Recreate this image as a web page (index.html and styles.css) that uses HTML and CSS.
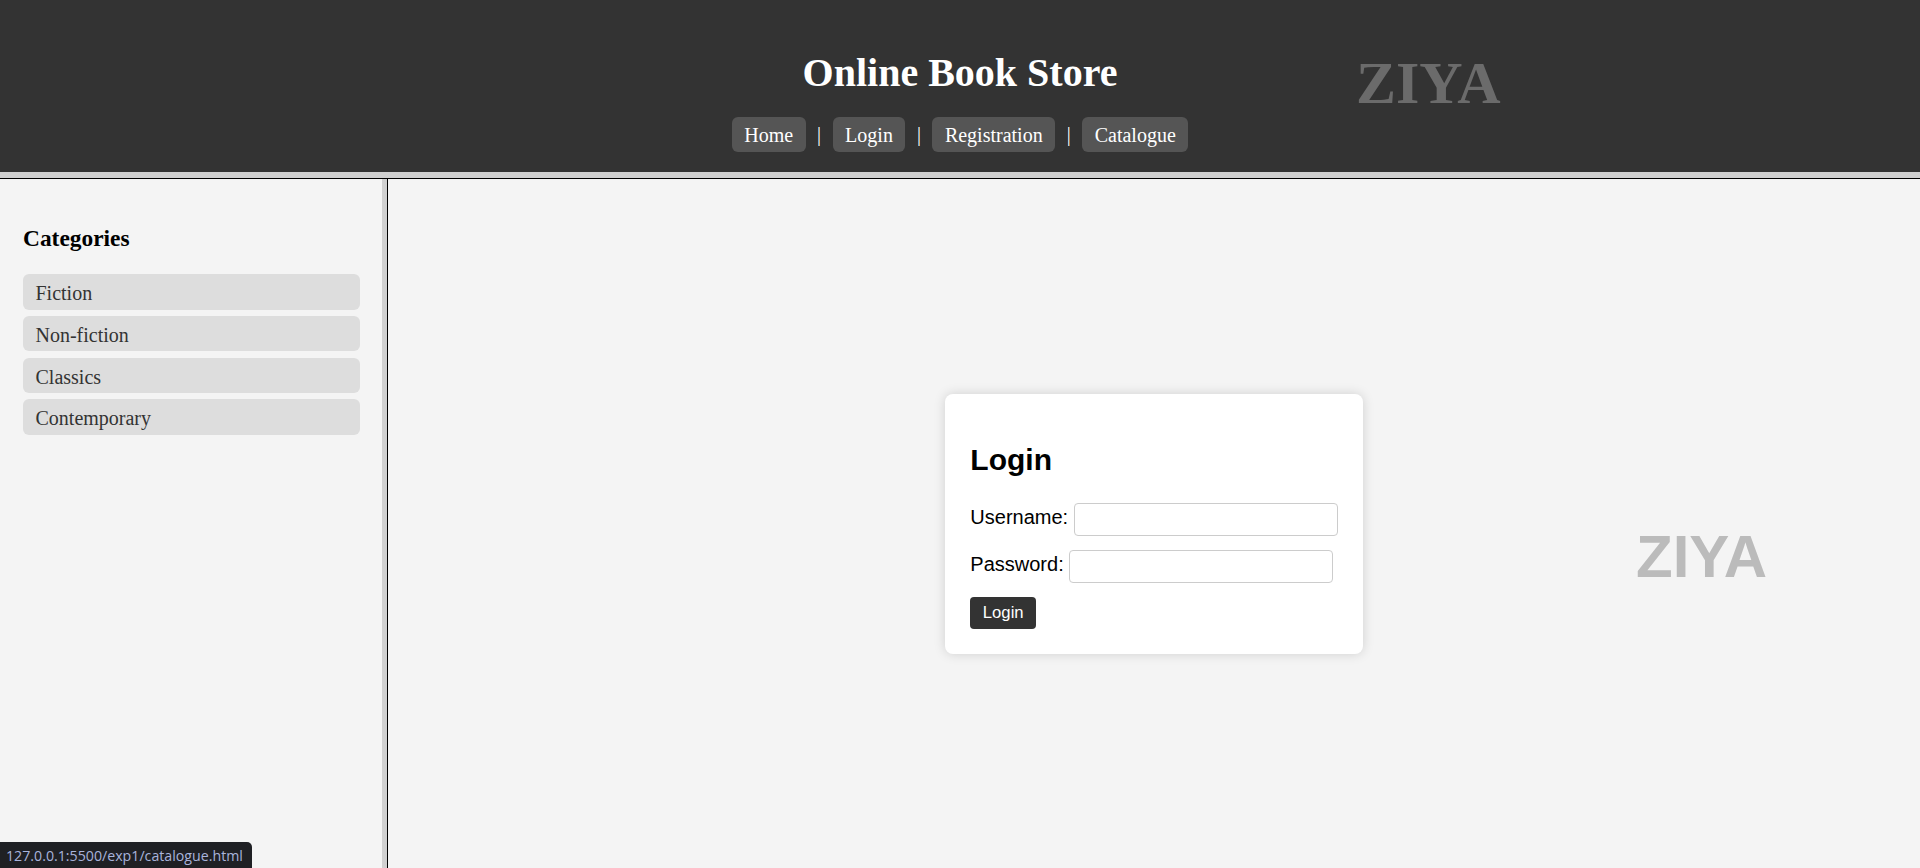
FILE: index.html
```html
<!DOCTYPE html>
<html lang="en">
<head>
<meta charset="utf-8">
<title>Online Book Store</title>
<link rel="stylesheet" href="styles.css">
</head>
<body>
<div class="page">
  <header class="top">
    <h1 class="title">Online Book Store</h1>
    <nav class="nav">
      <a class="nav-link" href="#">Home</a><span class="sep">|</span><a class="nav-link" href="#">Login</a><span class="sep">|</span><a class="nav-link" href="#">Registration</a><span class="sep">|</span><a class="nav-link" href="#">Catalogue</a>
    </nav>
    <div class="brand-mark">ZIYA</div>
  </header>
  <div class="hborder"></div>
  <div class="frames">
    <aside class="sidebar">
      <h3 class="cat-title">Categories</h3>
      <ul class="cat-list">
        <li class="cat-item">Fiction</li>
        <li class="cat-item">Non-fiction</li>
        <li class="cat-item">Classics</li>
        <li class="cat-item">Contemporary</li>
      </ul>
    </aside>
    <div class="vborder"></div>
    <main class="content">
      <form class="login-card">
        <h2 class="login-title">Login</h2>
        <div class="field"><label class="field-label" for="u">Username:</label><input class="field-input" id="u" type="text"></div>
        <div class="field"><label class="field-label" for="p">Password:</label><input class="field-input" id="p" type="password"></div>
        <button type="button" class="login-btn">Login</button>
      </form>
      <div class="content-mark">ZIYA</div>
    </main>
  </div>
</div>
<div class="status">127.0.0.1:5500/exp1/catalogue.html</div>
</body>
</html>
```
FILE: styles.css
```css
html, body {
  margin: 0;
  padding: 0;
  height: 100%;
  overflow: hidden;
}
body {
  background: #f4f4f4;
  font-family: "Liberation Serif", "Times New Roman", serif;
}
.page {
  display: flex;
  flex-direction: column;
  height: 100vh;
}
.top {
  position: relative;
  height: 172px;
  flex: none;
  background: #333333;
  display: flex;
  flex-direction: column;
  align-items: center;
}
.title {
  margin: 51px 0 0;
  font-size: 40px;
  line-height: 44px;
  font-weight: bold;
  color: #ffffff;
}
.nav {
  margin-top: 22px;
  display: flex;
  align-items: center;
}
.nav-link {
  display: block;
  padding: 6.75px 12.5px 5.75px;
  line-height: 22px;
  font-size: 20px;
  color: #ffffff;
  text-decoration: none;
  background: #555555;
  border-radius: 6px;
}
.sep {
  padding: 0 11.5px;
  font-size: 20px;
  line-height: 22px;
  color: #ffffff;
}
.brand-mark {
  position: absolute;
  left: 1356px;
  top: 53px;
  font-size: 60px;
  line-height: 60px;
  font-weight: bold;
  color: #6b6b6b;
}
.hborder {
  flex: none;
  height: 6px;
  background: #d0d0d0;
  border-bottom: 1px solid #000000;
}
.frames {
  flex: 1;
  display: flex;
  min-height: 0;
}
.sidebar {
  width: 382px;
  flex: none;
  box-sizing: border-box;
  padding: 0 22px 0 23px;
  background: #f4f4f4;
}
.cat-title {
  margin: 46px 0 23px;
  font-size: 23.4px;
  line-height: 26px;
  font-weight: bold;
  color: #000000;
}
.cat-list {
  list-style: none;
  margin: 0;
  padding: 0;
  display: flex;
  flex-direction: column;
  gap: 6.25px;
}
.cat-item {
  padding: 8px 12.5px 4.5px;
  line-height: 23px;
  font-size: 20px;
  color: #333333;
  background: #dddddd;
  border-radius: 6px;
}
.vborder {
  flex: none;
  width: 5px;
  background: #d0d0d0;
  border-right: 1px solid #000000;
}
.content {
  position: relative;
  flex: 1;
  display: flex;
  align-items: center;
  justify-content: center;
  background: #f4f4f4;
}
.login-card {
  display: flex;
  flex-direction: column;
  align-items: flex-start;
  padding: 25px;
  background: #ffffff;
  border-radius: 8px;
  box-shadow: 0 0 12px rgba(0, 0, 0, 0.15);
  font-family: "Liberation Sans", Arial, sans-serif;
}
.login-title {
  margin: 24px 0 26px;
  font-size: 30px;
  line-height: 34px;
  font-weight: bold;
  color: #000000;
}
.field {
  display: flex;
  align-items: baseline;
  gap: 5.5px;
  margin-bottom: 14px;
}
.field-label {
  font-size: 20px;
  line-height: 23px;
  color: #000000;
}
.field-input {
  box-sizing: border-box;
  width: 264px;
  height: 33px;
  margin: 0;
  padding: 0 8px;
  border: 1px solid #cccccc;
  border-radius: 4px;
  background: #ffffff;
  font-family: "Liberation Sans", Arial, sans-serif;
  font-size: 16.67px;
}
.login-btn {
  height: 32px;
  padding: 0 12.5px;
  margin: 0;
  border: none;
  border-radius: 4px;
  background: #333333;
  color: #ffffff;
  font-family: "Liberation Sans", Arial, sans-serif;
  font-size: 16.67px;
}
.content-mark {
  position: absolute;
  left: 1248px;
  top: 348px;
  font-family: "Liberation Sans", Arial, sans-serif;
  font-size: 60px;
  line-height: 60px;
  font-weight: bold;
  color: #bbbbbb;
}
.status {
  position: fixed;
  left: 0;
  bottom: 0;
  width: 252px;
  height: 26px;
  box-sizing: border-box;
  padding-left: 6px;
  background: #1f2024;
  color: #a9b4dc;
  border-top-right-radius: 5px;
  font-family: "Open Sans", "Noto Sans", sans-serif;
  font-size: 14.2px;
  line-height: 27px;
  white-space: nowrap;
  overflow: hidden;
}
```
